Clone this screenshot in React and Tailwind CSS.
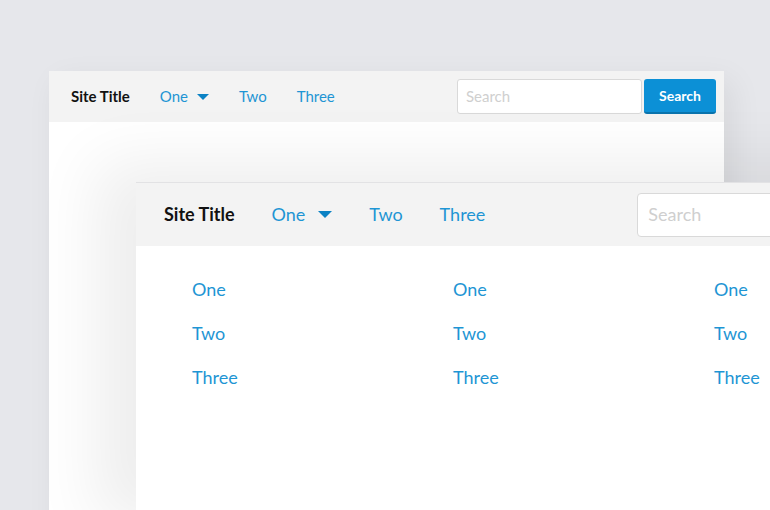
const font = { fontFamily: "Lato, 'Open Sans', sans-serif" };

function Caret({ className }) {
  return (
    <svg className={className} viewBox="0 0 12 6" fill="currentColor">
      <path d="M0 0h12L6 6z" />
    </svg>
  );
}

export default function App() {
  const cols = [0, 1, 2];

  return (
    <div
      className="relative w-[770px] h-[510px] overflow-hidden bg-[#e6e7eb]"
      style={font}
    >
      {/* Back window */}
      <div className="absolute left-[49px] top-[71px] w-[675px] h-[460px] bg-white shadow-[8px_10px_30px_rgba(0,0,0,0.07)]">
        <div className="h-[51px] bg-[#f3f3f3] flex items-center pl-[22px] pr-[8px]">
          <span className="text-[15px] font-bold text-[#111]">Site Title</span>
          <div className="flex items-center ml-[30px] text-[15px] text-[#1e95d4]">
            <span>One</span>
            <Caret className="w-[12px] h-[6px] ml-[9px] text-[#0b82c4]" />
          </div>
          <span className="ml-[30px] text-[15px] text-[#1e95d4]">Two</span>
          <span className="ml-[30px] text-[15px] text-[#1e95d4]">Three</span>
          <div className="ml-auto flex items-center gap-[2px]">
            <div className="w-[185px] h-[35px] bg-white border border-[#d9d9d9] rounded-[3px] flex items-center px-[8px] text-[15px] text-[#cfcfcf]">
              Search
            </div>
            <button className="w-[72px] h-[35px] rounded-[3px] bg-[#0c90d6] border-b-2 border-[#0a74ad] text-white text-[14px] font-bold">
              Search
            </button>
          </div>
        </div>
      </div>

      {/* Front window */}
      <div className="absolute left-[136px] top-[182px] w-[760px] h-[360px] bg-white shadow-[-40px_-20px_60px_rgba(0,0,0,0.07)]">
        <div className="h-[64px] bg-[#f3f3f3] border-t border-[#e2e2e4] flex items-center pl-[28px]">
          <span className="text-[18px] font-bold text-[#111]">Site Title</span>
          <div className="flex items-center ml-[37px] text-[18px] text-[#1e95d4]">
            <span>One</span>
            <Caret className="w-[14px] h-[7px] ml-[13px] text-[#0b82c4]" />
          </div>
          <span className="ml-[37px] text-[18px] text-[#1e95d4]">Two</span>
          <span className="ml-[37px] text-[18px] text-[#1e95d4]">Three</span>
          <div className="ml-[152px] w-[230px] h-[44px] bg-white border border-[#d9d9d9] rounded-[4px] flex items-center px-[10px] text-[18px] text-[#cfcfcf]">
            Search
          </div>
        </div>
        <div className="flex pl-[56px] pt-[31px]">
          {cols.map((c) => (
            <div key={c} className="w-[261px] shrink-0 flex flex-col gap-[20px] text-[18px] text-[#1e95d4] leading-[24px]">
              <span>One</span>
              <span>Two</span>
              <span>Three</span>
            </div>
          ))}
        </div>
      </div>
    </div>
  );
}
